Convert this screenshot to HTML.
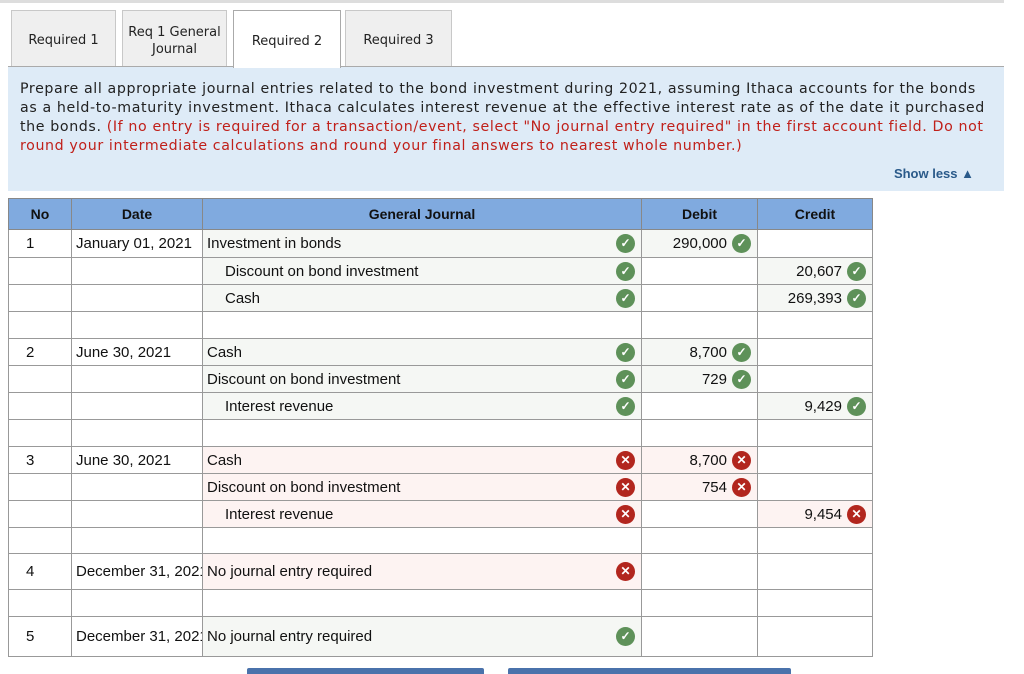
<!DOCTYPE html>
<html><head><style>
body{margin:0;width:1024px;height:672px;overflow:hidden;background:#fff;font-family:"Liberation Sans",Arial,sans-serif;position:relative}
.top{position:absolute;left:0;top:0;width:1004px;height:3px;background:#ddd}
.tab{position:absolute;top:10px;height:56px;width:105px;border:1px solid #c8c8c8;border-bottom:none;background:#efefef;box-sizing:border-box;font-family:"DejaVu Sans",sans-serif;font-size:13px;color:#222;display:flex;align-items:center;justify-content:center;text-align:center;line-height:17px;padding-top:4px}
.tab.act{background:#fff;border-color:#aaa;height:58px;z-index:2}
.panel{position:absolute;left:8px;top:66px;width:996px;height:125px;background:#deebf7;border-top:1px solid #aaa;box-sizing:border-box}
.panel p{margin:0;position:absolute;left:12px;top:13px;width:975px;font-family:"DejaVu Sans",sans-serif;font-size:14.2px;letter-spacing:0.62px;line-height:19px;color:#222}
.red{color:#c0201a}
.show{position:absolute;right:30px;top:99px;font-size:13px;font-weight:bold;color:#2a5a8a}
table{position:absolute;left:8px;top:198px;width:864px;border-collapse:collapse;font-size:15px;color:#111;table-layout:fixed}
td,th{border:1px solid #999;padding:0;box-sizing:border-box;position:relative;white-space:nowrap;overflow:visible}
th{background:#80aadf;font-weight:bold;height:31px;border-color:#888;font-size:14px}
.c1{padding-left:17px}
.c2{padding-left:4px;overflow:hidden}
.c3{padding-left:4px}
.c4{text-align:right;padding-right:30px}
.c5{text-align:right;padding-right:30px}
.ind{padding-left:22px}
.g{background:#f5f7f4}.r{background:#fdf3f2}
.i{position:absolute;top:50%;margin-top:-9.5px;width:19px;height:19px;border-radius:50%;color:#fff;font-size:12px;line-height:19px;text-align:center;font-weight:bold}
.ok{background:#5e9159}.no{background:#b2261e}
.c3 .i{right:6px}.c4 .i,.c5 .i{right:6px}
.btn{position:absolute;top:668px;height:6px;background:#4a72ab;border-radius:2px 2px 0 0}
</style></head><body>
<div class="top"></div>
<div class="tab" style="left:11px">Required 1</div>
<div class="tab" style="left:122px">Req 1 General<br>Journal</div>
<div class="tab act" style="left:233px;width:108px">Required 2</div>
<div class="tab" style="left:345px;width:107px">Required 3</div>
<div class="panel"><p>Prepare all appropriate journal entries related to the bond investment during 2021, assuming Ithaca accounts for the bonds as a held-to-maturity investment. Ithaca calculates interest revenue at the effective interest rate as of the date it purchased the bonds. <span class="red">(If no entry is required for a transaction/event, select "No journal entry required" in the first account field. Do not round your intermediate calculations and round your final answers to nearest whole number.)</span></p><div class="show">Show less ▲</div></div>
<table>
<colgroup><col style="width:63px"><col style="width:131px"><col style="width:439px"><col style="width:116px"><col style="width:115px"></colgroup>
<tr><th style="padding:0">No</th><th style="padding:0">Date</th><th style="padding:0">General Journal</th><th style="padding:0">Debit</th><th style="padding:0">Credit</th></tr>
<tr style="height:28px"><td class="c1">1</td><td class="c2">January 01, 2021</td><td class="c3 g">Investment in bonds<span class="i ok">✓</span></td><td class="c4 g">290,000<span class="i ok">✓</span></td><td class="c5"></td></tr>
<tr style="height:27px"><td class="c1"></td><td class="c2"></td><td class="c3 g ind">Discount on bond investment<span class="i ok">✓</span></td><td class="c4"></td><td class="c5 g">20,607<span class="i ok">✓</span></td></tr>
<tr style="height:27px"><td class="c1"></td><td class="c2"></td><td class="c3 g ind">Cash<span class="i ok">✓</span></td><td class="c4"></td><td class="c5 g">269,393<span class="i ok">✓</span></td></tr>
<tr style="height:27px"><td class="c1"></td><td class="c2"></td><td class="c3"></td><td class="c4"></td><td class="c5"></td></tr>
<tr style="height:27px"><td class="c1">2</td><td class="c2">June 30, 2021</td><td class="c3 g">Cash<span class="i ok">✓</span></td><td class="c4 g">8,700<span class="i ok">✓</span></td><td class="c5"></td></tr>
<tr style="height:27px"><td class="c1"></td><td class="c2"></td><td class="c3 g">Discount on bond investment<span class="i ok">✓</span></td><td class="c4 g">729<span class="i ok">✓</span></td><td class="c5"></td></tr>
<tr style="height:27px"><td class="c1"></td><td class="c2"></td><td class="c3 g ind">Interest revenue<span class="i ok">✓</span></td><td class="c4"></td><td class="c5 g">9,429<span class="i ok">✓</span></td></tr>
<tr style="height:27px"><td class="c1"></td><td class="c2"></td><td class="c3"></td><td class="c4"></td><td class="c5"></td></tr>
<tr style="height:27px"><td class="c1">3</td><td class="c2">June 30, 2021</td><td class="c3 r">Cash<span class="i no">✕</span></td><td class="c4 r">8,700<span class="i no">✕</span></td><td class="c5"></td></tr>
<tr style="height:27px"><td class="c1"></td><td class="c2"></td><td class="c3 r">Discount on bond investment<span class="i no">✕</span></td><td class="c4 r">754<span class="i no">✕</span></td><td class="c5"></td></tr>
<tr style="height:27px"><td class="c1"></td><td class="c2"></td><td class="c3 r ind">Interest revenue<span class="i no">✕</span></td><td class="c4"></td><td class="c5 r">9,454<span class="i no">✕</span></td></tr>
<tr style="height:26px"><td class="c1"></td><td class="c2"></td><td class="c3"></td><td class="c4"></td><td class="c5"></td></tr>
<tr style="height:36px"><td class="c1">4</td><td class="c2">December 31, 2021</td><td class="c3 r">No journal entry required<span class="i no">✕</span></td><td class="c4"></td><td class="c5"></td></tr>
<tr style="height:27px"><td class="c1"></td><td class="c2"></td><td class="c3"></td><td class="c4"></td><td class="c5"></td></tr>
<tr style="height:40px"><td class="c1">5</td><td class="c2">December 31, 2021</td><td class="c3 g">No journal entry required<span class="i ok">✓</span></td><td class="c4"></td><td class="c5"></td></tr>
</table>
<div class="btn" style="left:247px;width:237px"></div>
<div class="btn" style="left:508px;width:283px"></div>
</body></html>
